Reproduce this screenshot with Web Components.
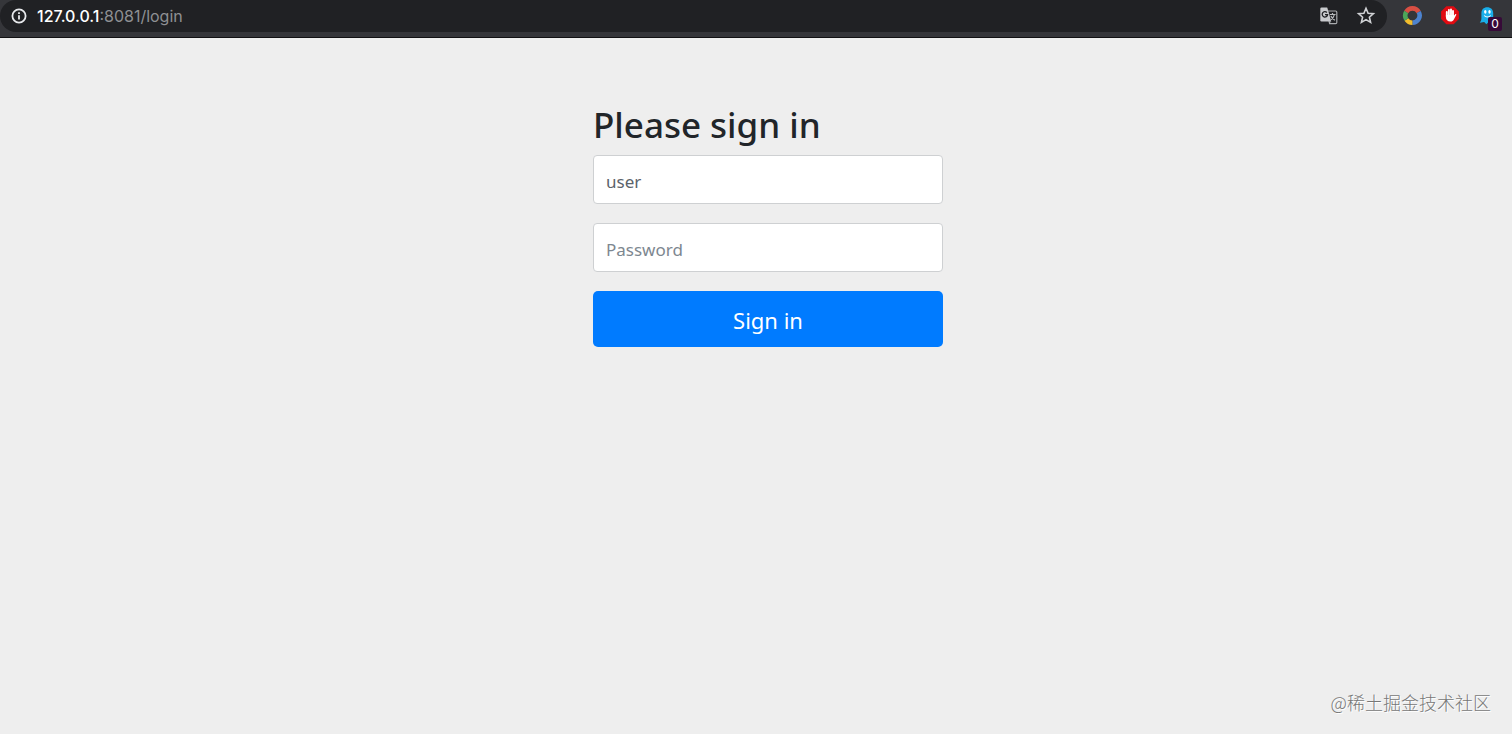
<!DOCTYPE html>
<html lang="en">
<head>
<meta charset="utf-8">
<title>Please sign in</title>
<style>
  html, body { margin: 0; min-height: 100%; background: #eee; }
  body { font-family: "Noto Sans", "Open Sans", sans-serif; color: #212529; }
</style>
</head>
<body>
<login-window></login-window>
<script>
  const define = (name, html, setup) => {
    const template = document.createElement('template');
    template.innerHTML = html;
    customElements.define(name, class extends HTMLElement {
      constructor() {
        super();
        this.attachShadow({ mode: 'open' }).append(template.content.cloneNode(true));
      }
      connectedCallback() { if (setup) setup(this, this.shadowRoot); }
    });
  };

  define('icon-button', `
    <style>
      :host { display: block; position: relative; }
      button { display: block; width: 20px; height: 20px; padding: 0; border: 0; background: none; }
      ::slotted(svg) { display: block; width: 20px; height: 20px; }
    </style>
    <button type="button"><slot></slot></button>
    <slot name="badge"></slot>`,
    (el, root) => root.querySelector('button').setAttribute('aria-label', el.getAttribute('label')));

  define('address-bar', `
    <style>
      :host {
        display: flex; align-items: center; gap: 10px; flex: 1; height: 32px; padding: 0 11px;
        box-sizing: border-box; border-radius: 16px; background: #202124;
        font: 16px/20px Inter, Roboto, sans-serif; color: #8e9093;
      }
      .info { width: 16px; height: 16px; }
      .url { flex: 1; white-space: nowrap; }
      b { font-weight: 500; color: #fff; }
      .actions { display: flex; gap: 18px; }
    </style>
    <svg class="info" viewBox="0 0 16 16" fill="none" stroke="#e8eaed" stroke-width="1.8">
      <circle cx="8" cy="8" r="6.6"/><path d="M8 7.2v4.2M8 4.3v1.8"/>
    </svg>
    <span class="url"><b>127.0.0.1</b>:8081/login</span>
    <div class="actions">
      <icon-button label="Translate this page">
        <svg viewBox="0 0 20 20">
          <path d="M9 5h8.600a1.200 1.200 0 0 1 1.200 1.200v10.300a1.200 1.200 0 0 1-1.200 1.200h-6z" fill="#202124" stroke="#a9abae" stroke-width="1.2"/>
          <path d="M3.600 1.500h5.600l1 3.300 3 10.700H3.600a1.300 1.300 0 0 1-1.300-1.300V2.800a1.300 1.300 0 0 1 1.300-1.300z" fill="#c8cacd"/>
          <path d="M8.900 6.500A2.700 2.700 0 1 0 9.600 8.700H7" fill="none" stroke="#202124" stroke-width="1.300"/>
          <path d="M11.800 8.500h5.800M14.500 7v1.500M16.400 8.500c-.5 2.400-1.800 4-3.400 5.200M12.900 10c.8 1.800 2.200 3.200 4 4.300" fill="none" stroke="#b8babd" stroke-width="1.200"/>
          <path d="M11 15.500h2.200l-1.900 2z" fill="#a9abae"/>
        </svg>
      </icon-button>
      <icon-button label="Bookmark this page">
        <svg viewBox="0 0 20 20" fill="none" stroke="#d0d2d5" stroke-width="1.600">
          <path d="M10 2.300l2.100 4.900 5.300.5-4 3.500 1.200 5.200-4.600-2.800-4.600 2.800 1.200-5.200-4-3.500 5.300-.5z"/>
        </svg>
      </icon-button>
    </div>`);

  define('browser-toolbar', `
    <style>
      :host {
        display: flex; align-items: flex-start; gap: 15px; height: 38px; padding-right: 14px;
        box-sizing: border-box; background: #35363a; border-bottom: 1px solid #111113;
      }
      .extensions { display: flex; gap: 18px; padding-top: 6px; }
      .count {
        position: absolute; left: 10px; top: 11px; width: 14px; height: 14px; border-radius: 2px;
        background: #370a38; color: #fff; font: 12px/14px Inter, sans-serif; text-align: center;
      }
    </style>
    <address-bar></address-bar>
    <div class="extensions">
      <icon-button label="Colour ring">
        <svg viewBox="0 0 20 20" fill="none" stroke-width="4.600">
          <path d="M4.200 6A7.200 7.200 0 0 1 16.700 6" stroke="#d94f43"/>
          <path d="M16.700 6A7.200 7.200 0 0 1 10.400 16.700" stroke="#4d83cf"/>
          <path d="M10.400 16.700A7.200 7.200 0 0 1 4.400 13.500" stroke="#f2bd2c"/>
          <path d="M4.400 13.500A7.200 7.200 0 0 1 4.200 6" stroke="#4da659"/>
        </svg>
      </icon-button>
      <icon-button label="Ad blocker">
        <svg viewBox="0 0 20 20">
          <path d="M6.400.300h7.200l5.300 5.300v7.400l-5.300 5.300H6.400L1.100 13V5.600z" fill="#e10b12"/>
          <path d="M6.800 10.500V6M8.900 9.500V4M11 9.500V3.500M13 9.500V5" stroke="#fff" stroke-width="1.900" stroke-linecap="round"/>
          <path d="M5.900 9h8v.7l1.300-1.400c.7-.5 1.400.1 1 .8l-2.500 4.600c-.6 1.200-1.600 1.800-3.200 1.800-2.900 0-4.600-1.800-4.600-4.300z" fill="#fff"/>
        </svg>
      </icon-button>
      <icon-button label="Tracker blocker">
        <svg viewBox="0 0 20 20">
          <path d="M3.400 7.200C3.400 3.500 5.700 1.200 9.200 1.200s6 2.300 6 6V13l2 3-2.800-.4-1.400 2.500-2.400-2-2.300 2.200-2.100-2.400-4.400.8c1.300-1.700 1.600-2.800 1.600-4.700z" fill="#19aeea"/>
          <g fill="#fff"><ellipse cx="7.300" cy="5.800" rx="1.200" ry="1.900"/><ellipse cx="11.500" cy="5.800" rx="1.200" ry="1.900"/></g>
          <path d="M6.200 9.500c1.600 2 4.800 2 6.500 0" fill="none" stroke="#fff" stroke-width="1.100"/>
        </svg>
        <span slot="badge" class="count">0</span>
      </icon-button>
    </div>`);

  define('text-field', `
    <style>
      :host { display: block; }
      input {
        display: block; width: 100%; height: 49px; box-sizing: border-box; margin: 0;
        padding: 3px 12px 0; border: 1px solid #ced0d2; border-radius: 4px; background: #fff;
        font: 17px/27px "Noto Sans", "Open Sans", sans-serif; color: #5b636b; outline: none;
      }
      input::placeholder { color: #7d8790; opacity: 1; }
    </style>
    <input>`,
    (el, root) => {
      const input = root.querySelector('input');
      input.setAttribute('aria-label', el.getAttribute('label'));
      input.type = el.getAttribute('type');
      input.placeholder = el.getAttribute('label');
      input.value = el.getAttribute('value') || '';
    });

  define('sign-in-form', `
    <style>
      :host { display: block; width: 100%; max-width: 350px; }
      form { display: grid; gap: 19px; margin: 0; }
      h2 { margin: 0 0 8px; font-size: 35px; line-height: 44px; font-weight: 500; white-space: nowrap; }
      button {
        height: 56px; padding: 2px 16px 0; border: 0; border-radius: 5px; background: #007bff;
        color: #fff; font: 22px/32px "Noto Sans", "Open Sans", sans-serif;
      }
    </style>
    <h2>Please sign in</h2>
    <form>
      <text-field label="Username" type="text" value="user"></text-field>
      <text-field label="Password" type="password"></text-field>
      <button type="submit">Sign in</button>
    </form>`);

  define('community-mark', `
    <style>
      :host {
        display: block; font: 18px/24px "Noto Sans CJK SC", sans-serif; font-weight: 300;
        color: #777; text-shadow: 1px 1px #fff; white-space: nowrap;
      }
    </style>
    <slot></slot>`);

  define('login-window', `
    <style>
      :host { display: flex; flex-direction: column; min-height: 100vh; }
      main { display: flex; justify-content: center; flex: 1; padding: 65px 0 0 24px; }
      footer { display: flex; justify-content: flex-end; padding: 0 21px 20px; }
    </style>
    <browser-toolbar></browser-toolbar>
    <main><sign-in-form></sign-in-form></main>
    <footer><community-mark>@稀土掘金技术社区</community-mark></footer>`);
</script>
</body>
</html>
